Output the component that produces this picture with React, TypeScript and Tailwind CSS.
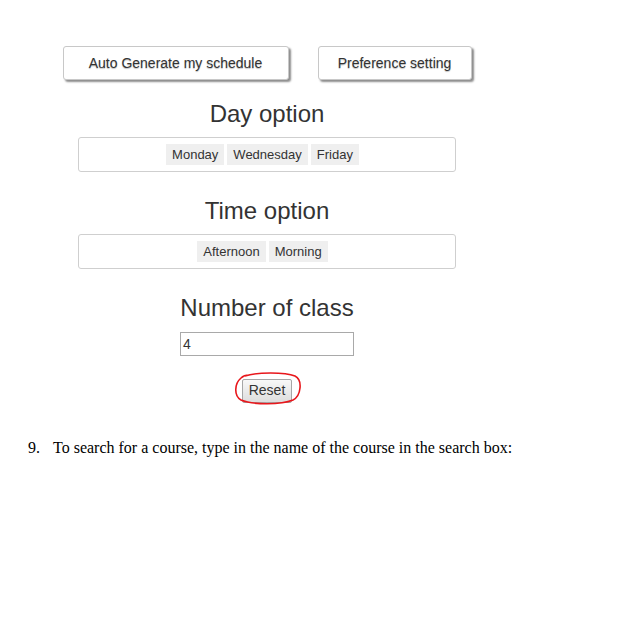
import React from "react";

const chip = "bg-[#efefef] px-[6px] h-[21px] leading-[21px] text-[13px] text-[#333]";

export default function App() {
  return (
    <div className="w-[633px] h-[625px] bg-white relative" style={{ fontFamily: '"Liberation Sans", Arial, sans-serif' }}>
      <div className="pt-[46px] ml-[78px] w-[378px] flex flex-col items-center">
        <div className="flex gap-[29px]">
          <button className="w-[226px] h-[34px] rounded-[3px] border border-[#c8c8c8] bg-white text-[14px] text-[#333] shadow-[2px_2px_2px_rgba(0,0,0,0.45)] [text-shadow:0_1px_1px_rgba(0,0,0,0.25)]">
            Auto Generate my schedule
          </button>
          <button className="w-[154px] h-[34px] rounded-[3px] border border-[#c8c8c8] bg-white text-[14px] text-[#333] shadow-[2px_2px_2px_rgba(0,0,0,0.45)] [text-shadow:0_1px_1px_rgba(0,0,0,0.25)]">
            Preference setting
          </button>
        </div>
        <h2 className="mt-[21px] text-[24px] leading-[26px] text-[#333]">Day option</h2>
        <div className="mt-[10px] w-[378px] h-[35px] border border-[#cfcfcf] rounded-[3px] flex items-center justify-center gap-[3px] pr-[9px]">
          <span className={chip}>Monday</span>
          <span className={chip}>Wednesday</span>
          <span className={chip}>Friday</span>
        </div>
        <h2 className="mt-[26px] text-[24px] leading-[26px] text-[#333]">Time option</h2>
        <div className="mt-[10px] w-[378px] h-[35px] border border-[#cfcfcf] rounded-[3px] flex items-center justify-center gap-[3px] pr-[9px]">
          <span className={chip}>Afternoon</span>
          <span className={chip}>Morning</span>
        </div>
        <h2 className="mt-[26px] text-[24px] leading-[26px] text-[#333]">Number of class</h2>
        <div className="mt-[11px] w-[174px] h-[24px] border border-[#a9a9a9] flex items-center px-[2px] text-[14px] text-[#333]">
          4
        </div>
        <div className="mt-[22px] relative">
          <button className="h-[24px] px-[6px] border border-[#a6a6a6] rounded-[2px] bg-gradient-to-b from-[#f8f8f8] to-[#dddddd] text-[14px] text-[#333]">
            Reset
          </button>
          <svg className="absolute left-[-9px] top-[-8px]" width="70" height="36" viewBox="0 0 70 36">
            <path
              d="M12 6 C 24 2, 52 2, 62 6 C 70 10, 68 26, 60 30 C 48 35, 20 35, 8 30 C 1 26, 1 14, 8 8 C 10 6, 13 5, 16 5"
              fill="none"
              stroke="#e8171c"
              strokeWidth="1.6"
            />
          </svg>
        </div>
      </div>
      <div className="mt-[33px] flex text-[16px] text-black" style={{ fontFamily: '"Liberation Serif", "Times New Roman", serif' }}>
        <span className="ml-[28px] w-[25px]">9.</span>
        <span>To search for a course, type in the name of the course in the search box:</span>
      </div>
    </div>
  );
}
